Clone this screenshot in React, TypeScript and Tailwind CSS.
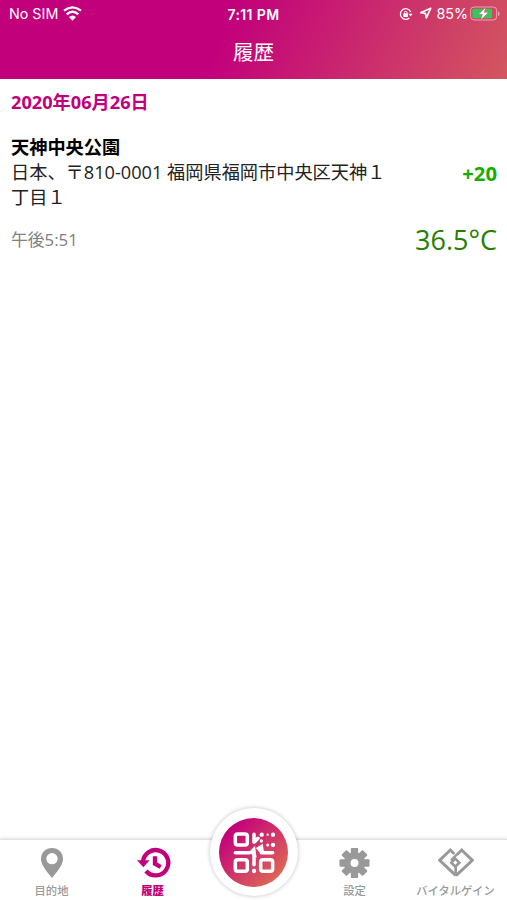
import type { ReactNode } from "react";

const WifiIcon = () => (
  <svg className="w-[19px] h-[15px]" viewBox="0 0 57 45" fill="none" stroke="#fff" strokeWidth="7">
    <path d="M3 14 Q28.500 -6 54 14" />
    <path d="M11 25 Q28.500 9 46 25" />
    <path d="M18 33 Q28.500 24 39 33 L28.500 44 Z" fill="#fff" stroke="none" />
  </svg>
);

const RotationLockIcon = () => (
  <svg className="w-[14px] h-[14px]" viewBox="0 0 42 42" fill="none" stroke="#fff" strokeWidth="3.800">
    <path d="M35 15 A16 16 0 1 0 31 33" />
    <path d="M28 20 h13 l-6 8 z" fill="#fff" stroke="none" />
    <rect x="13" y="19" width="14" height="11" rx="2" fill="#fff" stroke="none" />
    <path d="M16 20 v-3 a4 4 0 0 1 8 0 v3" strokeWidth="3" />
  </svg>
);

const LocationIcon = () => (
  <svg className="w-[13px] h-[13px]" viewBox="0 0 39 39" fill="none" stroke="#fff" strokeWidth="5" strokeLinejoin="round">
    <path d="M35 4 L5 17 L19 19 L22 33 Z" />
  </svg>
);

const BatteryIcon = () => (
  <svg className="w-[30px] h-[15px]" viewBox="0 0 90 45">
    <rect x="2" y="3" width="78" height="39" rx="10" fill="none" stroke="#eda1b8" strokeWidth="3" />
    <rect x="7" y="8" width="59" height="29" rx="5" fill="#34c759" />
    <path d="M84 16 q5 2 5 7 q0 5 -5 7 z" fill="#eda1b8" />
    <path d="M47 4 L25 25 H37 L32 42 L56 19 H43 Z" fill="#fff" stroke="#d14b73" strokeWidth="1.500" />
  </svg>
);

const PinIcon = () => (
  <svg className="w-[24px] h-[32px]" viewBox="0 0 72 96" fill="#999">
    <path fillRule="evenodd" d="M36 3 C17 3 3 17 3 36 C3 56 24 78 36 93 C48 78 69 56 69 36 C69 17 55 3 36 3 Z M36 18 A17 17 0 1 1 36 52 A17 17 0 1 1 36 18 Z" />
  </svg>
);

const HistoryIcon = () => (
  <svg className="w-[34px] h-[32px] ml-[2px]" viewBox="0 0 102 96" fill="none" stroke="#c2007b">
    <path d="M18 44 A38 38 0 1 1 27 72" strokeWidth="13" />
    <path d="M0 40 H38 L19 61 Z" fill="#c2007b" stroke="none" />
    <path d="M54 28 V50 L71 60" strokeWidth="13" />
  </svg>
);

const GearIcon = () => (
  <svg className="w-[31px] h-[32px]" viewBox="-46.500 -48 93 96" fill="#999">
    {[0, 45, 90, 135, 180, 225, 270, 315].map((angle) => (
      <rect key={angle} x="-11" y="-45" width="22" height="20" rx="3" transform={`rotate(${angle})`} />
    ))}
    <circle r="22" fill="none" stroke="#999" strokeWidth="20" />
  </svg>
);

const VitalGainIcon = () => (
  <svg className="w-[36px] h-[32px]" viewBox="23 21 108 96" fill="none" stroke="#999" strokeWidth="9">
    <path d="M72 42 L60 30 L28 61 L76 106" />
    <path d="M79 45 L94 30 L126 61 L77 107" />
    <path d="M79 44 L62 61" strokeWidth="7" />
    <path d="M75 56 L87 68 L75 80 L63 68 Z" strokeWidth="8" />
    <path d="M76 81 V107" strokeWidth="8" />
  </svg>
);

const QrIcon = () => (
  <svg className="w-[44px] h-[44px]" viewBox="98 91 132 132" fill="none" stroke="#fff" strokeWidth="10.500" strokeLinecap="round">
    <rect x="108" y="103" width="36" height="33" rx="7" />
    <rect x="108" y="180" width="36" height="35" rx="7" />
    <rect x="184" y="180" width="36" height="35" rx="7" />
    <path d="M108 159 H150 M164 165 V195 M186 159 H220" />
    <path d="M164 104 V128 M166 126 L176 116" />
    <path d="M152 158 L165 145 L168 168 Z M174 146 L188 137 L191 157 L182 155 Z" fill="#fff" strokeWidth="6" />
    <g fill="#fff" stroke="none">
      <circle cx="187" cy="105" r="6.500" />
      <circle cx="205" cy="105" r="3.500" />
      <circle cx="221" cy="105" r="6.500" />
      <circle cx="186" cy="124" r="5" />
      <circle cx="205" cy="136" r="4.500" />
      <circle cx="221" cy="136" r="6.500" />
      <circle cx="164" cy="214" r="6.500" />
    </g>
  </svg>
);

const Tab = (props: { label: string; icon: ReactNode; active?: boolean }) => (
  <div className="w-[101px] flex flex-col items-center pt-[7px]">
    {props.icon}
    <span
      className={
        props.active
          ? "mt-[3px] text-[11.300px] leading-[16px] font-black text-[#c2007b]"
          : "mt-[3px] text-[11.300px] leading-[16px] font-medium text-[#999] whitespace-nowrap"
      }
    >
      {props.label}
    </span>
  </div>
);

const App = () => {
  return (
    <div className="w-[507px] h-[900px] flex flex-col overflow-hidden bg-white font-['Open_Sans','Noto_Sans_CJK_JP',sans-serif]">
      <header className="h-[79px] shrink-0 text-white bg-[linear-gradient(115deg,#c2007b_0%,#c2007b_44%,#d3575f_100%)]">
        <div className="h-[27px] grid grid-cols-3 items-center px-[9px] text-[14.300px] font-['Inter','Liberation_Sans',sans-serif]">
          <div className="flex items-center gap-[5px]">
            <span>No SIM</span>
            <WifiIcon />
          </div>
          <span className="text-center text-[14px] font-semibold whitespace-nowrap tracking-[0.4px] pt-px">7:11 PM</span>
          <div className="flex items-center justify-end -mr-[2px]">
            <RotationLockIcon />
            <span className="ml-[6px]"><LocationIcon /></span>
            <span className="ml-[4px] mr-[2px]">85%</span>
            <BatteryIcon />
          </div>
        </div>
        <h1 className="text-center text-[20.500px] leading-[48px] font-normal font-['Noto_Sans_CJK_JP',sans-serif]">履歴</h1>
      </header>

      <main className="flex-1 pl-[11px] pr-[10px]">
        <h2 className="pt-[11px] text-[18.200px] leading-[25px] font-bold text-[#c2007b]">2020年06月26日</h2>
        <div className="mt-[20px] flex justify-between">
          <div className="text-[18.200px] leading-[25px] text-[#222]">
            <p className="font-bold text-black">天神中央公園</p>
            <p>日本、〒810-0001 福岡県福岡市中央区天神{"\uFF11"}<br />丁目{"\uFF11"}</p>
          </div>
          <p className="pt-[25px] text-[20.300px] leading-[26px] font-bold text-[#17ad00]">+20</p>
        </div>
        <div className="mt-[12px] flex items-center justify-between">
          <p className="text-[16.800px] leading-[36px] text-[#808080]">午後5:51</p>
          <p className="text-[27px] leading-[36px] text-[#268000]">36.5°C</p>
        </div>
      </main>

      <nav className="h-[61px] shrink-0 flex border-t border-[#e2e2e2] bg-white pl-px shadow-[0_-1px_3px_rgba(0,0,0,0.12)] font-['Noto_Sans_CJK_JP',sans-serif]">
        <Tab label="目的地" icon={<PinIcon />} />
        <Tab label="履歴" icon={<HistoryIcon />} active />
        <div className="w-[101px] flex justify-center">
          <div className="-mt-[32px] w-[88px] h-[88px] shrink-0 rounded-full bg-white flex items-center justify-center shadow-[0_0_4px_rgba(0,0,0,0.25)]">
            <div className="w-[69px] h-[69px] rounded-full flex items-center justify-center bg-[linear-gradient(135deg,#c2007b_15%,#e27b4f_100%)]">
              <QrIcon />
            </div>
          </div>
        </div>
        <Tab label="設定" icon={<GearIcon />} />
        <Tab label="バイタルゲイン" icon={<VitalGainIcon />} />
      </nav>
    </div>
  );
};

export default App;
